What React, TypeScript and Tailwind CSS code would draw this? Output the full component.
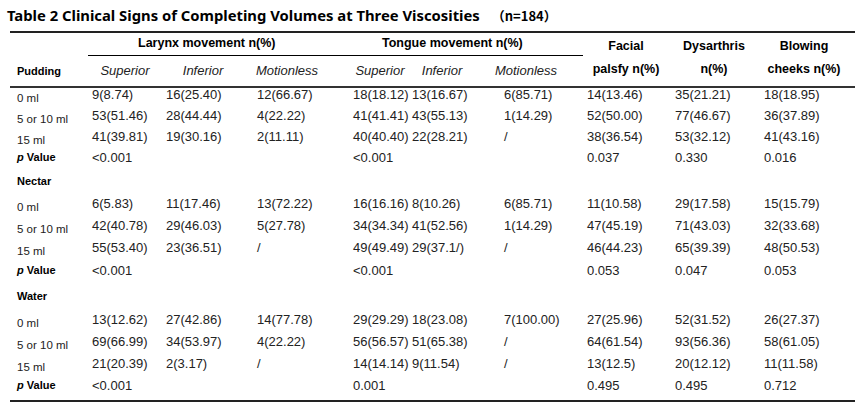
const cols = "grid grid-cols-[78px_74px_91px_96px_59px_92px_83px_88px_89px_95px]"

// content widths used to center header words over the data in each column
const subHeads = [
  { t: "Superior", w: "w-[66px]" },
  { t: "Inferior", w: "w-[74px]" },
  { t: "Motionless", w: "w-[60px]" },
  { t: "Superior", w: "w-[54px]" },
  { t: "Inferior", w: "w-[60px]" },
  { t: "Motionless", w: "w-[44px]" },
]

type Row = { label: string; kind: "ml" | "group" | "p"; cells?: string[]; h: string }

const rows: Row[] = [
  { label: "0 ml", kind: "ml", h: "h-[21px]", cells: ["9(8.74)", "16(25.40)", "12(66.67)", "18(18.12)", "13(16.67)", "6(85.71)", "14(13.46)", "35(21.21)", "18(18.95)"] },
  { label: "5 or 10 ml", kind: "ml", h: "h-[21px]", cells: ["53(51.46)", "28(44.44)", "4(22.22)", "41(41.41)", "43(55.13)", "1(14.29)", "52(50.00)", "77(46.67)", "36(37.89)"] },
  { label: "15 ml", kind: "ml", h: "h-[21px]", cells: ["41(39.81)", "19(30.16)", "2(11.11)", "40(40.40)", "22(28.21)", "/", "38(36.54)", "53(32.12)", "41(43.16)"] },
  { label: "p Value", kind: "p", h: "h-[23px]", cells: ["<0.001", "", "", "<0.001", "", "", "0.037", "0.330", "0.016"] },
  { label: "Nectar", kind: "group", h: "h-[23px]" },
  { label: "0 ml", kind: "ml", h: "h-[22px]", cells: ["6(5.83)", "11(17.46)", "13(72.22)", "16(16.16)", "8(10.26)", "6(85.71)", "11(10.58)", "29(17.58)", "15(15.79)"] },
  { label: "5 or 10 ml", kind: "ml", h: "h-[22px]", cells: ["42(40.78)", "29(46.03)", "5(27.78)", "34(34.34)", "41(52.56)", "1(14.29)", "47(45.19)", "71(43.03)", "32(33.68)"] },
  { label: "15 ml", kind: "ml", h: "h-[23px]", cells: ["55(53.40)", "23(36.51)", "/", "49(49.49)", "29(37.1/)", "/", "46(44.23)", "65(39.39)", "48(50.53)"] },
  { label: "p Value", kind: "p", h: "h-[25px]", cells: ["<0.001", "", "", "<0.001", "", "", "0.053", "0.047", "0.053"] },
  { label: "Water", kind: "group", h: "h-[24px]" },
  { label: "0 ml", kind: "ml", h: "h-[22px]", cells: ["13(12.62)", "27(42.86)", "14(77.78)", "29(29.29)", "18(23.08)", "7(100.00)", "27(25.96)", "52(31.52)", "26(27.37)"] },
  { label: "5 or 10 ml", kind: "ml", h: "h-[22px]", cells: ["69(66.99)", "34(53.97)", "4(22.22)", "56(56.57)", "51(65.38)", "/", "64(61.54)", "93(56.36)", "58(61.05)"] },
  { label: "15 ml", kind: "ml", h: "h-[22px]", cells: ["21(20.39)", "2(3.17)", "/", "14(14.14)", "9(11.54)", "/", "13(12.5)", "20(12.12)", "11(11.58)"] },
  { label: "p Value", kind: "p", h: "h-[22px]", cells: ["<0.001", "", "", "0.001", "", "", "0.495", "0.495", "0.712"] },
]

const TableRow = ({ row }: { row: Row }) => {
  let label
  if (row.kind === "ml") {
    label = <div className="pl-[7px] pt-[4px] text-[11.5px] leading-[15px] text-[#222]">{row.label}</div>
  } else if (row.kind === "p") {
    label = (
      <div className="pl-[7px] text-[11px] leading-[15px] font-bold text-black">
        <span className="italic">p</span> Value
      </div>
    )
  } else {
    label = <div className="pl-[7px] pt-[1px] text-[11px] leading-[15px] font-bold text-black">{row.label}</div>
  }

  return (
    <div className={`${cols} ${row.h}`}>
      {label}
      {(row.cells || ["", "", "", "", "", "", "", "", ""]).map((c, i) => (
        <div key={i} className="pl-1 text-[13px] leading-[15px] text-[#222] whitespace-nowrap">
          {c}
        </div>
      ))}
    </div>
  )
}

const App = () => {
  return (
    <div className="w-[866px] h-[412px] bg-white font-['Liberation_Sans',Arial,sans-serif]">
      <div className="h-[31px] pl-[7px] pt-[5px] text-[14.8px] leading-[20px] font-bold text-black whitespace-nowrap font-['Noto_Sans','Noto_Sans_CJK_SC',sans-serif]">
        Table 2 Clinical Signs of Completing Volumes at Three Viscosities
        <span className="ml-[12px] font-['Noto_Sans_CJK_SC',sans-serif] text-[13px]">（n=184）</span>
      </div>

      <div className="ml-[10px] w-[845px] border-t-2 border-[#222] border-b-2">
        {/* header */}
        <div className={`${cols} grid-rows-[23px_30px] border-b-2 border-[#333]`}>
          <div className="col-start-1 row-start-1" />
          <div className="col-start-2 col-span-3 row-start-1 border-b border-black pl-[50px] pt-[3px] text-[12.5px] leading-[15px] font-bold text-black whitespace-nowrap">
            Larynx movement n(%)
          </div>
          <div className="col-start-5 col-span-3 row-start-1 border-b border-black pl-[33px] pt-[3px] text-[12.5px] leading-[15px] font-bold text-black whitespace-nowrap">
            Tongue movement n(%)
          </div>
          {[
            ["Facial", "palsfy n(%)", "col-start-8", "w-[78px]"],
            ["Dysarthris", "n(%)", "col-start-9", "w-[78px]"],
            ["Blowing", "cheeks n(%)", "col-start-10", "w-[80px]"],
          ].map(([a, b, c, w]) => (
            <div key={a} className={`${c} row-start-1 row-span-2 pl-1 pt-[2px]`}>
              <div className={`${w} flex flex-col items-center text-[12.5px] leading-[23px] font-bold text-black whitespace-nowrap`}>
                <span>{a}</span>
                <span>{b}</span>
              </div>
            </div>
          ))}
          <div className="col-start-1 row-start-2 flex items-center pl-[7px] text-[11px] font-bold text-black">Pudding</div>
          {subHeads.map((s, i) => (
            <div key={i} className="row-start-2 flex items-center pl-1" style={{ gridColumnStart: i + 2 }}>
              <div className={`${s.w} flex justify-center text-[13px] italic text-[#222] whitespace-nowrap`}>{s.t}</div>
            </div>
          ))}
        </div>

        {/* body */}
        <div className="-mt-[1px]">
          {rows.map((r, i) => (
            <TableRow key={i} row={r} />
          ))}
        </div>
      </div>
    </div>
  )
}

export default App
